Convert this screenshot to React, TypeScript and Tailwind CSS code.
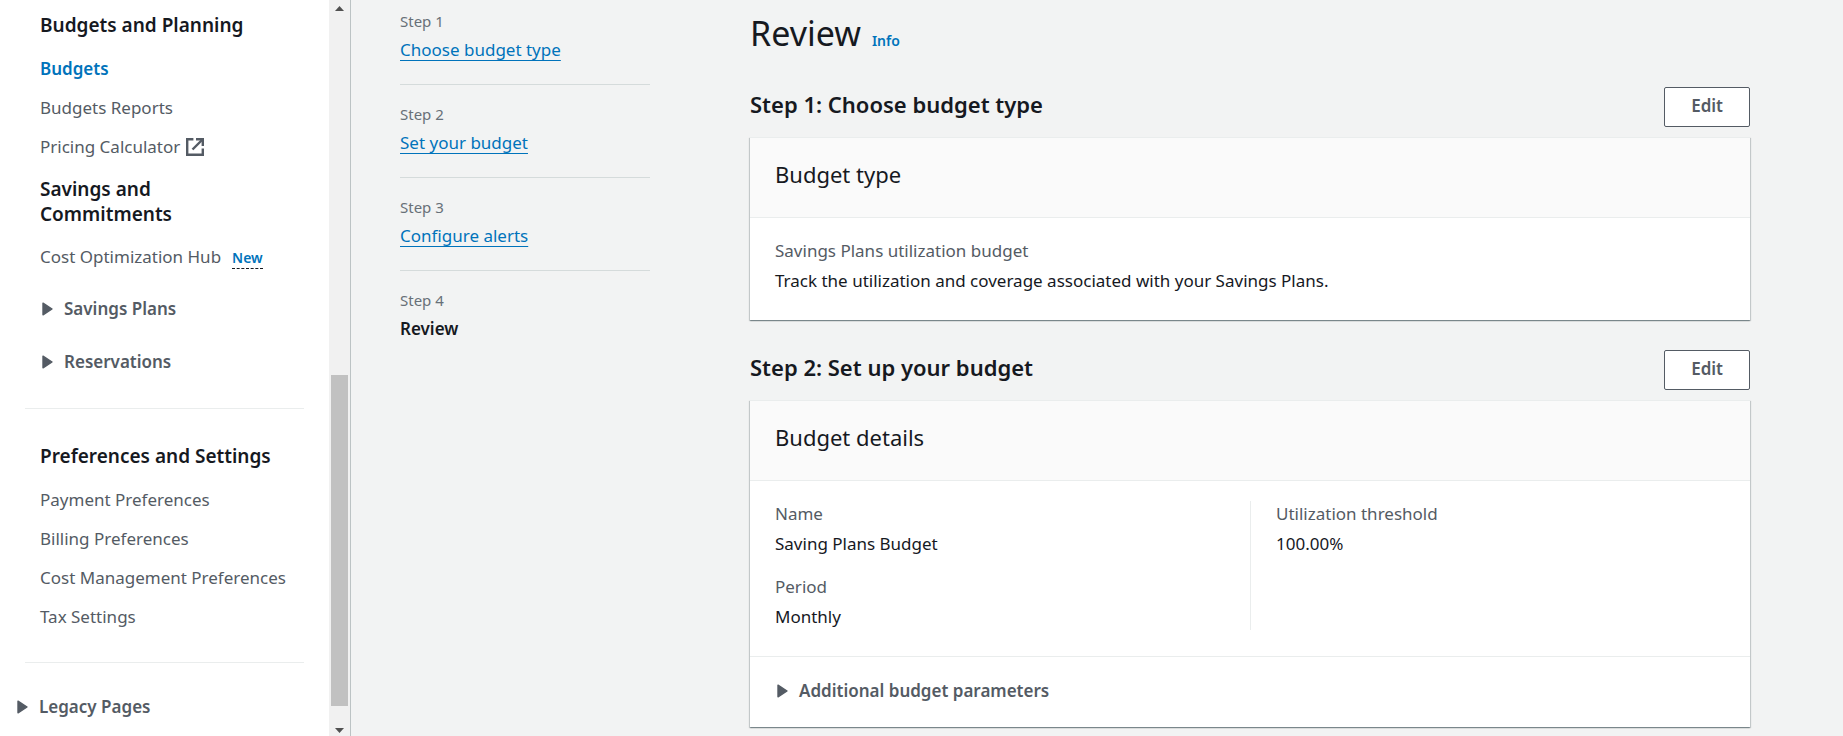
import type { ReactNode } from "react";

function Caret() {
  return (
    <svg width="11" height="14" viewBox="0 0 11 14" className="shrink-0" aria-hidden="true">
      <path d="M1 1.2v11.6L10 7z" fill="#545b64" stroke="#545b64" strokeWidth="1.4" strokeLinejoin="round" />
    </svg>
  );
}

function ExternalIcon() {
  return (
    <svg width="18" height="18" viewBox="0 0 18 18" fill="none" stroke="#545b64" strokeWidth="2.4" aria-hidden="true">
      <path d="M7.4 1.2H1.2V16.8H16.8V10.6" />
      <path d="M10 1.2h6.8V8" />
      <path d="M16.5 1.5L6.5 11.5" />
    </svg>
  );
}

function NavLink({ children }: { children: ReactNode }) {
  return (
    <a href="#" className="block text-[17px] leading-6 text-[#545b64]">
      {children}
    </a>
  );
}

function NavHeading({ children }: { children: ReactNode }) {
  return <h2 className="text-[19px] font-semibold leading-[25px] text-[#16191f]">{children}</h2>;
}

function Expander({ children }: { children: ReactNode }) {
  return (
    <button type="button" className="flex items-center gap-[11px] text-[17px] font-semibold leading-6 text-[#545b64]">
      <Caret />
      {children}
    </button>
  );
}

function Sidebar() {
  return (
    <aside className="flex w-[351px] shrink-0 border-r border-[#bcc3c4] bg-white">
      <nav className="flex-1 px-[25px] pt-[13px]">
        <div className="pl-[15px]">
          <NavHeading>Budgets and Planning</NavHeading>
          <div className="flex flex-col gap-[15px] pt-[19px]">
            <a href="#" className="text-[17px] font-semibold leading-6 text-[#0073bb]">
              Budgets
            </a>
            <NavLink>Budgets Reports</NavLink>
            <a href="#" className="flex items-center gap-1.5 text-[17px] leading-6 text-[#545b64]">
              Pricing Calculator
              <ExternalIcon />
            </a>
          </div>
          <div className="max-w-40 pt-[18px]">
            <NavHeading>Savings and Commitments</NavHeading>
          </div>
          <div className="flex items-baseline gap-[11px] pt-[18px]">
            <NavLink>Cost Optimization Hub</NavLink>
            <button type="button" className="border-b border-dashed border-[#16191f] text-[14px] font-semibold leading-5 text-[#0073bb]">
              New
            </button>
          </div>
          <div className="flex flex-col gap-[29px] pt-7 pl-0.5">
            <Expander>Savings Plans</Expander>
            <Expander>Reservations</Expander>
          </div>
        </div>
        <hr className="mt-[34px] border-[#eaeded]" />
        <div className="pt-[35px] pl-[15px]">
          <NavHeading>Preferences and Settings</NavHeading>
          <div className="flex flex-col gap-[15px] pt-[19px]">
            <NavLink>Payment Preferences</NavLink>
            <NavLink>Billing Preferences</NavLink>
            <NavLink>Cost Management Preferences</NavLink>
            <NavLink>Tax Settings</NavLink>
          </div>
        </div>
        <hr className="mt-[33px] border-[#eaeded]" />
        <div className="-ml-2 pt-8">
          <Expander>Legacy Pages</Expander>
        </div>
      </nav>
      <div className="flex w-[21px] flex-col items-center bg-[#f1f1f1]" aria-hidden="true">
        <svg width="9" height="21" viewBox="0 0 9 21">
          <path d="M0 11h9L4.5 6z" fill="#505050" />
        </svg>
        <div className="flex w-[17px] flex-1 flex-col">
          <div className="grow-[354]" />
          <div className="grow-[331] bg-[#c1c1c1]" />
          <div className="grow-[9]" />
        </div>
        <svg width="9" height="21" viewBox="0 0 9 21">
          <path d="M0 13h9l-4.5 5z" fill="#505050" />
        </svg>
      </div>
    </aside>
  );
}

const steps = ["Choose budget type", "Set your budget", "Configure alerts", "Review"];

function Steps() {
  return (
    <ol className="w-[250px] shrink-0 divide-y divide-[#d5dbdb]">
      {steps.map((step, i) => (
        <li key={step} className="pt-[19px] pb-[22px] first:pt-[11px]">
          <p className="text-[15px] leading-5 text-[#687078]">Step {i + 1}</p>
          <div className="pt-[7px] text-[17px] leading-6">
            {i < 3 ? (
              <a
                href="#"
                className="text-[#0073bb] underline decoration-1 underline-offset-4 [text-decoration-skip-ink:none]"
              >
                {step}
              </a>
            ) : (
              <span className="font-semibold text-[#16191f]">{step}</span>
            )}
          </div>
        </li>
      ))}
    </ol>
  );
}

function Section({ heading, title, children }: { heading: string; title: string; children: ReactNode }) {
  return (
    <section>
      <div className="flex items-start justify-between">
        <h2 className="pt-0.5 text-[22px] font-semibold leading-[30px] text-[#16191f]">{heading}</h2>
        <button
          type="button"
          className="h-10 rounded-xs border border-[#545b64] bg-white px-[26px] pb-0.5 text-[17px] font-semibold leading-6 text-[#545b64]"
        >
          Edit
        </button>
      </div>
      <div className="mt-2.5 border-t border-[#eaeded] bg-white shadow-[0_1px_1px_0_rgba(0,28,36,0.3),1px_1px_1px_0_rgba(0,28,36,0.15),-1px_1px_1px_0_rgba(0,28,36,0.15)]">
        <div className="border-b border-[#eaeded] bg-[#fafafa] px-[25px] pt-[19px] pb-[25px]">
          <h3 className="text-[22px] leading-[35px] text-[#16191f]">{title}</h3>
        </div>
        {children}
      </div>
    </section>
  );
}

function Field({ label, value }: { label: string; value: string }) {
  return (
    <div className="text-[17px]">
      <dt className="leading-[26px] text-[#545b64]">{label}</dt>
      <dd className="pt-1 leading-[26px] text-[#16191f]">{value}</dd>
    </div>
  );
}

export default function App() {
  return (
    <div className="flex min-h-screen bg-[#f2f3f3] font-['Noto_Sans',sans-serif]">
      <Sidebar />
      <main className="flex flex-1 gap-[100px] pr-[93px] pl-[49px]">
        <Steps />
        <div className="flex-1">
          <div className="flex items-baseline gap-[11px] pt-[11px]">
            <h1 className="text-[34px] leading-[44px] text-[#16191f]">Review</h1>
            <a href="#" className="text-[14px] font-semibold leading-5 text-[#0073bb]">
              Info
            </a>
          </div>
          <div className="flex flex-col gap-[30px] pt-8">
            <Section heading="Step 1: Choose budget type" title="Budget type">
              <dl className="px-[25px] pt-5 pb-[26px]">
                <Field
                  label="Savings Plans utilization budget"
                  value="Track the utilization and coverage associated with your Savings Plans."
                />
              </dl>
            </Section>
            <Section heading="Step 2: Set up your budget" title="Budget details">
              <dl className="grid grid-cols-2 px-[25px] pt-5 pb-[26px]">
                <div className="flex flex-col gap-[17px]">
                  <Field label="Name" value="Saving Plans Budget" />
                  <Field label="Period" value="Monthly" />
                </div>
                <div className="border-l border-[#eaeded] pl-[25px]">
                  <Field label="Utilization threshold" value="100.00%" />
                </div>
              </dl>
              <div className="border-t border-[#eaeded] px-[27px] pt-[22px] pb-6">
                <Expander>Additional budget parameters</Expander>
              </div>
            </Section>
          </div>
        </div>
      </main>
    </div>
  );
}
